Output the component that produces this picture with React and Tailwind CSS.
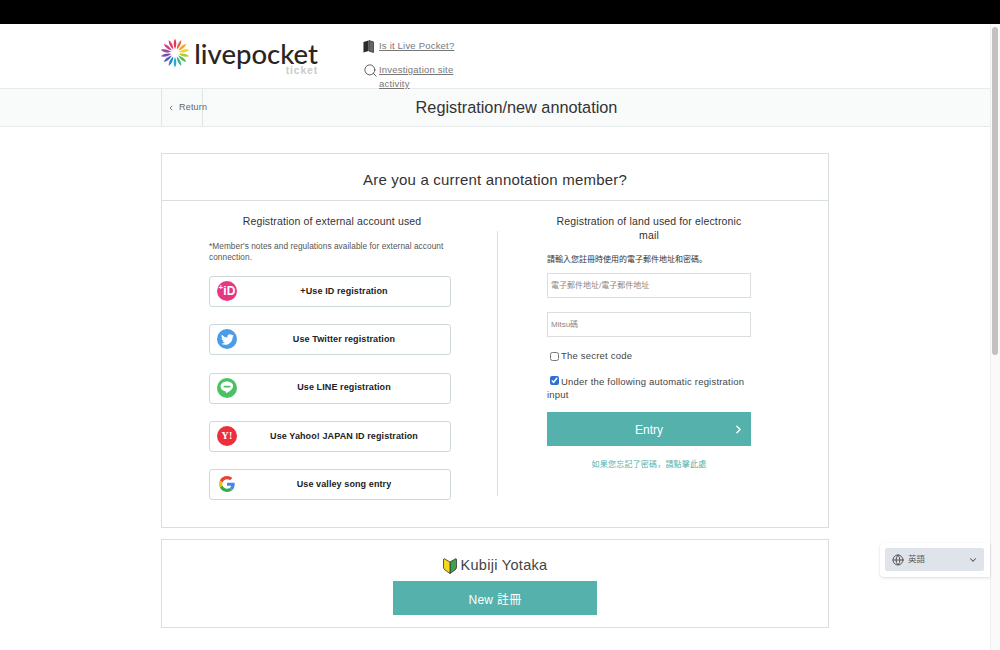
import { ChevronDown, ChevronLeft, ChevronRight, Globe, Search } from "lucide-react";

const font = { fontFamily: '"Liberation Sans", "Noto Sans CJK JP", "Noto Sans CJK TC", sans-serif' };

function Burst() {
  const colors = ["#e8384f", "#f0643c", "#f6a21e", "#f4d21f", "#a5cf3a", "#55b947", "#2fb59a", "#25a9d6", "#2b7fd0", "#4c5fc0", "#7a4fb5", "#a0479f", "#c9408a", "#e23c6c"];
  return (
    <svg width="28" height="30" viewBox="-14 -15 28 30">
      {colors.map((c, i) => (
        <path key={i} d="M0 -14.500 C1.900 -11 1.600 -7.500 0 -4 C-1.600 -7.500 -1.900 -11 0 -14.500Z" fill={c} transform={`rotate(${(i * 360) / 14})`} />
      ))}
    </svg>
  );
}

function BookIcon() {
  return (
    <svg width="11" height="13" viewBox="0 0 12 14">
      <path d="M0.500 2 L6 0.500 V12 L0.500 13.500Z" fill="#2b2b2b" />
      <path d="M6.500 0.500 L11.500 2 V13.500 L6.500 12Z" fill="#666" stroke="#2b2b2b" strokeWidth="0.800" />
    </svg>
  );
}

function PlusIdIcon() {
  return (
    <div className="flex h-[20px] w-[20px] items-center justify-center rounded-full bg-[#e8377f] text-[12px] leading-none text-white">
      <span className="mb-[6px] text-[8px] font-bold">+</span>
      <span>iD</span>
    </div>
  );
}

function TwitterIcon() {
  return (
    <div className="flex h-[20px] w-[20px] items-center justify-center rounded-full bg-[#4a9be8]">
      <svg width="13" height="13" viewBox="0 0 24 24" fill="#fff">
        <path d="M23.95 4.57a10 10 0 0 1-2.82.77 4.96 4.96 0 0 0 2.16-2.72 9.9 9.9 0 0 1-3.12 1.19 4.92 4.92 0 0 0-8.38 4.48A13.96 13.96 0 0 1 1.67 3.15a4.92 4.92 0 0 0 1.52 6.57 4.9 4.9 0 0 1-2.23-.61v.06a4.92 4.92 0 0 0 3.95 4.83 5 5 0 0 1-2.21.08 4.94 4.94 0 0 0 4.6 3.42A9.87 9.87 0 0 1 0 19.54a13.94 13.94 0 0 0 7.55 2.21c9.05 0 14-7.5 14-13.98 0-.21 0-.42-.02-.63a10 10 0 0 0 2.46-2.55z" />
      </svg>
    </div>
  );
}

function LineIcon() {
  return (
    <div className="flex h-[20px] w-[20px] items-center justify-center rounded-full bg-[#4cc164]">
      <svg width="14" height="13" viewBox="0 0 14 13">
        <path d="M7 0.500C3.300 0.500 0.500 2.800 0.500 5.600c0 2.500 2.200 4.500 5.200 5 .5.100.3.700.2 1.100 0 .4.3.4.7.2 1.600-.9 3.600-2.200 4.900-3.500 1-1 1.500-1.800 1.500-2.800C13.500 2.800 10.700 0.500 7 0.500Z" fill="#fff" />
        <rect x="3.500" y="4.800" width="7" height="1.600" rx="0.800" fill="#4cc164" />
      </svg>
    </div>
  );
}

function YahooIcon() {
  return (
    <div className="flex h-[20px] w-[20px] items-center justify-center rounded-full bg-[#ec2f3d] text-[10px] font-bold leading-none text-white" style={{ fontFamily: '"Liberation Serif", serif' }}>
      Y!
    </div>
  );
}

function GoogleIcon() {
  return (
    <div className="flex h-[20px] w-[20px] items-center justify-center">
      <svg width="16" height="16" viewBox="0 0 48 48">
        <path fill="#EA4335" d="M24 9.500c3.540 0 6.710 1.220 9.210 3.600l6.850-6.850C35.900 2.380 30.470 0 24 0 14.620 0 6.510 5.380 2.560 13.220l7.980 6.190C12.430 13.720 17.740 9.500 24 9.500z" />
        <path fill="#4285F4" d="M46.980 24.550c0-1.570-.15-3.090-.38-4.550H24v9.020h12.940c-.58 2.960-2.260 5.480-4.780 7.180l7.730 6c4.510-4.180 7.090-10.360 7.090-17.650z" />
        <path fill="#FBBC05" d="M10.530 28.590c-.48-1.450-.76-2.990-.76-4.590s.27-3.140.76-4.590l-7.980-6.190C.92 16.460 0 20.120 0 24c0 3.880.92 7.540 2.560 10.780l7.970-6.190z" />
        <path fill="#34A853" d="M24 48c6.480 0 11.930-2.130 15.890-5.810l-7.730-6c-2.150 1.450-4.920 2.300-8.160 2.300-6.260 0-11.570-4.220-13.470-9.910l-7.980 6.190C6.510 42.620 14.620 48 24 48z" />
      </svg>
    </div>
  );
}

function Leaf() {
  return (
    <svg width="14" height="16" viewBox="0 0 14 16">
      <path d="M7 4 L12.500 0.800 Q13.500 0.500 13.500 2 V9 Q13.500 11 12 12 L7 15.500Z" fill="#3fa34d" stroke="#333" strokeWidth="0.800" />
      <path d="M7 4 L1.500 0.800 Q0.500 0.500 0.500 2 V9 Q0.500 11 2 12 L7 15.500Z" fill="#f2d91f" stroke="#333" strokeWidth="0.800" />
    </svg>
  );
}

const providers = [
  { label: "+Use ID registration", icon: <PlusIdIcon /> },
  { label: "Use Twitter registration", icon: <TwitterIcon /> },
  { label: "Use LINE registration", icon: <LineIcon /> },
  { label: "Use Yahoo! JAPAN ID registration", icon: <YahooIcon /> },
  { label: "Use valley song entry", icon: <GoogleIcon /> },
];

export default function App() {
  return (
    <div className="relative flex h-[650px] w-[1000px] flex-col overflow-hidden bg-white text-[#333]" style={font}>
      <div className="h-[24px] bg-black" />
      <div className="flex min-h-0 flex-1">
        <div className="min-w-0 flex-1">
          {/* Header */}
          <div className="relative z-10 flex h-[64px] pl-[161px]">
            <div className="flex h-[64px] w-[200px] items-start pt-[14px]">
              <Burst />
              <div className="ml-[6px] flex w-[123px] flex-col items-end pt-[4px]">
                <span className="text-[27.500px] font-medium leading-[24px] text-[#2b2424]" style={{ fontFamily: "Lato, sans-serif" }}>livepocket</span>
                <span className="text-[10.500px] font-bold leading-[8px] tracking-[0.8px] text-[#c9cccc]">ticket</span>
              </div>
            </div>
            <div className="ml-[2px] w-[92px] pt-[14px] text-[9.500px] tracking-[0.2px] text-[#777]">
              <div className="flex h-[16px] items-center">
                <div className="flex w-[16px]"><BookIcon /></div>
                <span className="underline">Is it Live Pocket?</span>
              </div>
              <div className="mt-[9px] flex">
                <Search size={15} strokeWidth={1.500} className="mr-px shrink-0 text-[#555]" />
                <span className="leading-[14px] underline">Investigation site activity</span>
              </div>
            </div>
          </div>

          {/* Title bar */}
          <div className="relative flex h-[39px] items-center justify-center border-y border-[#e6eaea] bg-[#f9fafa]">
            <div className="absolute left-[161px] top-0 flex h-[37px] w-[42px] items-center border-x border-[#e0e5e5] pl-[5px] text-[9px] tracking-[0.2px] whitespace-nowrap text-[#666]">
              <ChevronLeft size={8} strokeWidth={2.500} className="mr-[4px] shrink-0" />
              Return
            </div>
            <h1 className="ml-[43px] text-[16.300px] font-normal text-[#333]">Registration/new annotation</h1>
          </div>

          {/* Login card */}
          <div className="ml-[161px] mt-[26px] w-[668px] border border-[#d9dfdf]">
            <div className="flex h-[47px] items-center justify-center border-b border-[#d9dfdf] pt-[6px] text-[15px] tracking-[0.2px] text-[#333]">
              Are you a current annotation member?
            </div>
            <div className="flex h-[326px]">
              <div className="w-[335px] pl-[47px] pt-[13px]">
                <h2 className="w-[242px] pl-[4px] text-center text-[10.500px] font-normal leading-[14px] tracking-[0.14px]">Registration of external account used</h2>
                <p className="mt-[13px] w-[242px] text-[8.300px] leading-[11px] tracking-[0.05px] text-[#555]">*Member's notes and regulations available for external account connection.</p>
                <div className="mt-[13px] flex w-[242px] flex-col gap-[17.250px]">
                  {providers.map((p) => (
                    <div key={p.label} className="relative flex h-[31px] items-center justify-center rounded-[3px] border border-[#cfd8d8] text-[9px] font-bold tracking-[0.1px] text-[#222]">
                      <div className="absolute left-[7px] top-[4px]">{p.icon}</div>
                      <span className="ml-[28px]">{p.label}</span>
                    </div>
                  ))}
                </div>
              </div>
              <div className="mt-[30px] h-[265px] w-px bg-[#d9dfdf]" />
              <div className="ml-[49px] w-[204px] pt-[13px]">
                <h2 className="px-[6px] text-center text-[10.500px] font-normal leading-[14px] tracking-[0.14px]">Registration of land used for electronic mail</h2>
                <p className="mt-[12px] text-[8px] leading-[12px] text-[#333]">請輸入您註冊時使用的電子郵件地址和密碼。</p>
                <div className="mt-[7px] flex h-[25px] items-center border border-[#d9dfdf] pl-[3px] text-[8px] text-[#888]">電子郵件地址/電子郵件地址</div>
                <div className="mt-[14px] flex h-[25px] items-center border border-[#d9dfdf] pl-[3px] text-[8px] text-[#888]">Mitsu碼</div>
                <label className="mt-[13px] flex h-[12px] items-center pl-[3px] text-[9.500px] tracking-[0.2px] text-[#444]">
                  <input type="checkbox" className="mr-[2px] h-[9px] w-[9px]" readOnly />
                  The secret code
                </label>
                <label className="mt-[13px] block text-[9.500px] leading-[13px] tracking-[0.2px] text-[#444]">
                  <input type="checkbox" defaultChecked className="mb-[-1px] ml-[3px] mr-[2px] h-[9px] w-[9px] accent-[#2f6fd8]" />
                  Under the following automatic registration input
                </label>
                <div className="relative mt-[11px] flex h-[34px] items-center justify-center bg-[#55b1ac] pt-[1px] text-[12px] text-white">
                  Entry
                  <ChevronRight size={13} strokeWidth={2.500} className="absolute right-[6px] top-[11px]" />
                </div>
                <p className="mt-[13px] text-center text-[8px] leading-[12px] tracking-[0.2px] text-[#55b1ac]">如果您忘記了密碼，請點擊此處</p>
              </div>
            </div>
          </div>

          {/* New member */}
          <div className="ml-[161px] mt-[11px] flex h-[89px] w-[668px] flex-col items-center border border-[#d9dfdf] pt-[16px]">
            <div className="flex h-[19px] items-center gap-[4px] text-[14.500px] tracking-[0.3px] text-[#444]">
              <Leaf />
              Kubiji Yotaka
            </div>
            <div className="mt-[6px] flex h-[34px] w-[204px] items-center justify-center bg-[#55b1ac] pt-[3px] text-[12px] tracking-[0.3px] text-white">New 註冊</div>
          </div>
        </div>

        {/* Scrollbar */}
        <div className="w-[10px] border-l border-[#eeeeee] bg-[#fafafa] pl-[1px] pt-[3px]">
          <div className="h-[328px] w-[6px] rounded-full bg-[#c2c2c2]" />
        </div>
      </div>

      {/* Language picker */}
      <div className="absolute left-[880px] top-[543px] h-[34px] w-[110px] rounded-l-[4px] bg-white p-[5px] shadow-[0_1px_3px_rgba(0,0,0,0.15)]">
        <div className="flex h-[23px] w-[99px] items-center rounded-[2px] bg-[#dfe3ea] pl-[7px] pr-[6px] text-[8.500px] text-[#555]">
          <Globe size={12} className="mr-[3px] text-[#555]" />
          <span className="ml-[1px]">英語</span>
          <ChevronDown size={10} strokeWidth={2.500} className="ml-auto" />
        </div>
      </div>
    </div>
  );
}
